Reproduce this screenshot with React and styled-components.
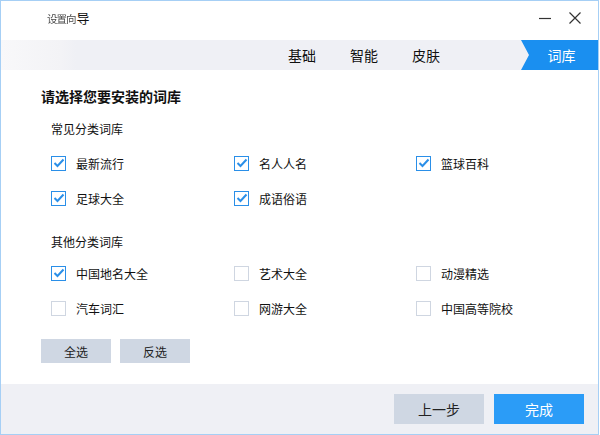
import React, { useState } from "react";
import styled, { createGlobalStyle } from "styled-components";

const Global = createGlobalStyle`
  html, body { margin: 0; padding: 0; background: #ffffff; }
  body { font-family: "Microsoft YaHei", "Noto Sans CJK SC", "Noto Sans", sans-serif; }
  * { box-sizing: border-box; }
`;

const Window = styled.div`
  width: 599px;
  height: 435px;
  border: 1px solid #a6cff5;
  background: #ffffff;
  display: flex;
  flex-direction: column;
  overflow: hidden;
`;

const TitleBar = styled.div`
  height: 39px;
  display: flex;
  align-items: center;
  padding-left: 46px;
  padding-right: 8px;
  flex-shrink: 0;
`;

const Title = styled.div`
  font-size: 13px;
  color: #111;
  flex: 1;
  margin-top: -6px;
`;

const Faded = styled.span`
  color: #4a4a4a;
  font-size: 10.5px;
  letter-spacing: -1px;
  filter: blur(0.3px);
  margin-right: 1px;
`;

const WinBtn = styled.button`
  width: 30px;
  height: 30px;
  border: 0;
  background: transparent;
  padding: 0;
  display: flex;
  align-items: center;
  justify-content: center;
  margin-top: -6px;
`;

const TabBar = styled.div`
  height: 30px;
  display: flex;
  justify-content: flex-end;
  background: linear-gradient(to right, #f8f8fa 0px, #f3f3f6 60px, #eff0f5 75px);
  flex-shrink: 0;
`;

const Tab = styled.div`
  width: ${(p) => p.$w}px;
  height: 30px;
  display: flex;
  align-items: center;
  justify-content: center;
  font-size: 14px;
  color: ${(p) => (p.$active ? "#ffffff" : "#111111")};
  background: ${(p) => (p.$active ? "#1a8ff0" : "transparent")};
  clip-path: ${(p) =>
    p.$active ? "polygon(0 0, 100% 0, 100% 100%, 0 100%, 8px 50%)" : "none"};
  padding-left: ${(p) => (p.$active ? "4px" : "0")};
  margin-left: ${(p) => (p.$active ? "64px" : "0")};
`;

const Body = styled.div`
  flex: 1;
  padding: 16px 0 0 40px;
  display: flex;
  flex-direction: column;
`;

const Heading = styled.div`
  font-size: 14px;
  font-weight: bold;
  color: #111;
  line-height: 20px;
`;

const SectionLabel = styled.div`
  font-size: 12px;
  color: #111;
  line-height: 16px;
  padding-left: 10px;
  margin-top: ${(p) => p.$mt}px;
`;

const Grid = styled.div`
  display: grid;
  grid-template-columns: 183px 182px 150px;
  row-gap: 21px;
  padding-left: 10px;
  margin-top: ${(p) => p.$mt}px;
`;

const Item = styled.label`
  display: flex;
  align-items: center;
  height: 14px;
  font-size: 12px;
  color: #111;
  cursor: pointer;
`;

const Box = styled.span`
  width: 15px;
  height: 15px;
  border: 1px solid ${(p) => (p.$on ? "#2a8fe8" : "#cfd6e1")};
  background: #fff;
  display: flex;
  align-items: center;
  justify-content: center;
  margin-right: 10px;
  flex-shrink: 0;
`;

const BtnRow = styled.div`
  display: flex;
  gap: 9px;
  margin-top: 24px;
`;

const GreyBtn = styled.button`
  width: ${(p) => p.$w}px;
  height: ${(p) => p.$h}px;
  border: 0;
  background: #cfd7e3;
  color: #222;
  font-family: inherit;
  font-size: ${(p) => p.$fs}px;
  padding: 0;
`;

const Footer = styled.div`
  height: 50px;
  background: #eff0f5;
  display: flex;
  justify-content: flex-end;
  align-items: center;
  gap: 10px;
  padding-right: 14px;
  flex-shrink: 0;
`;

const PrimaryBtn = styled.button`
  width: 90px;
  height: 30px;
  border: 0;
  background: #2b9cf7;
  color: #fff;
  font-family: inherit;
  font-size: 14px;
  padding: 0;
`;

const Check = () => (
  <svg width="12" height="10" viewBox="0 0 12 10">
    <path d="M1.5 5 L4.5 8 L10.5 1.5" fill="none" stroke="#2a8fe8" strokeWidth="2" />
  </svg>
);

function CheckItem({ label, on, onToggle }) {
  return (
    <Item onClick={onToggle}>
      <Box $on={on}>{on && <Check />}</Box>
      {label}
    </Item>
  );
}

const common = ["最新流行", "名人人名", "篮球百科", "足球大全", "成语俗语"];
const others = ["中国地名大全", "艺术大全", "动漫精选", "汽车词汇", "网游大全", "中国高等院校"];

export default function App() {
  const [sel, setSel] = useState({
    最新流行: true,
    名人人名: true,
    篮球百科: true,
    足球大全: true,
    成语俗语: true,
    中国地名大全: true,
  });
  const toggle = (k) => setSel((s) => ({ ...s, [k]: !s[k] }));
  const all = [...common, ...others];

  return (
    <>
      <Global />
      <Window>
        <TitleBar>
          <Title>
            <Faded>设置向</Faded>导
          </Title>
          <WinBtn aria-label="minimize">
            <svg width="14" height="14" viewBox="0 0 14 14">
              <path d="M1 7.5 H13" stroke="#333" strokeWidth="1.2" />
            </svg>
          </WinBtn>
          <WinBtn aria-label="close">
            <svg width="14" height="14" viewBox="0 0 14 14">
              <path d="M1.5 1.5 L12.5 12.5 M12.5 1.5 L1.5 12.5" stroke="#333" strokeWidth="1.2" />
            </svg>
          </WinBtn>
        </TitleBar>
        <TabBar>
          <Tab $w={62}>基础</Tab>
          <Tab $w={62}>智能</Tab>
          <Tab $w={62}>皮肤</Tab>
          <Tab $w={77} $active>词库</Tab>
        </TabBar>
        <Body>
          <Heading>请选择您要安装的词库</Heading>
          <SectionLabel $mt={15}>常见分类词库</SectionLabel>
          <Grid $mt={19}>
            {common.map((k) => (
              <CheckItem key={k} label={k} on={!!sel[k]} onToggle={() => toggle(k)} />
            ))}
          </Grid>
          <SectionLabel $mt={29}>其他分类词库</SectionLabel>
          <Grid $mt={16}>
            {others.map((k) => (
              <CheckItem key={k} label={k} on={!!sel[k]} onToggle={() => toggle(k)} />
            ))}
          </Grid>
          <BtnRow>
            <GreyBtn $w={70} $h={24} $fs={12} onClick={() => setSel(Object.fromEntries(all.map((k) => [k, true])))}>
              全选
            </GreyBtn>
            <GreyBtn $w={70} $h={24} $fs={12} onClick={() => setSel((s) => Object.fromEntries(all.map((k) => [k, !s[k]])))}>
              反选
            </GreyBtn>
          </BtnRow>
        </Body>
        <Footer>
          <GreyBtn $w={90} $h={30} $fs={14}>上一步</GreyBtn>
          <PrimaryBtn>完成</PrimaryBtn>
        </Footer>
      </Window>
    </>
  );
}
